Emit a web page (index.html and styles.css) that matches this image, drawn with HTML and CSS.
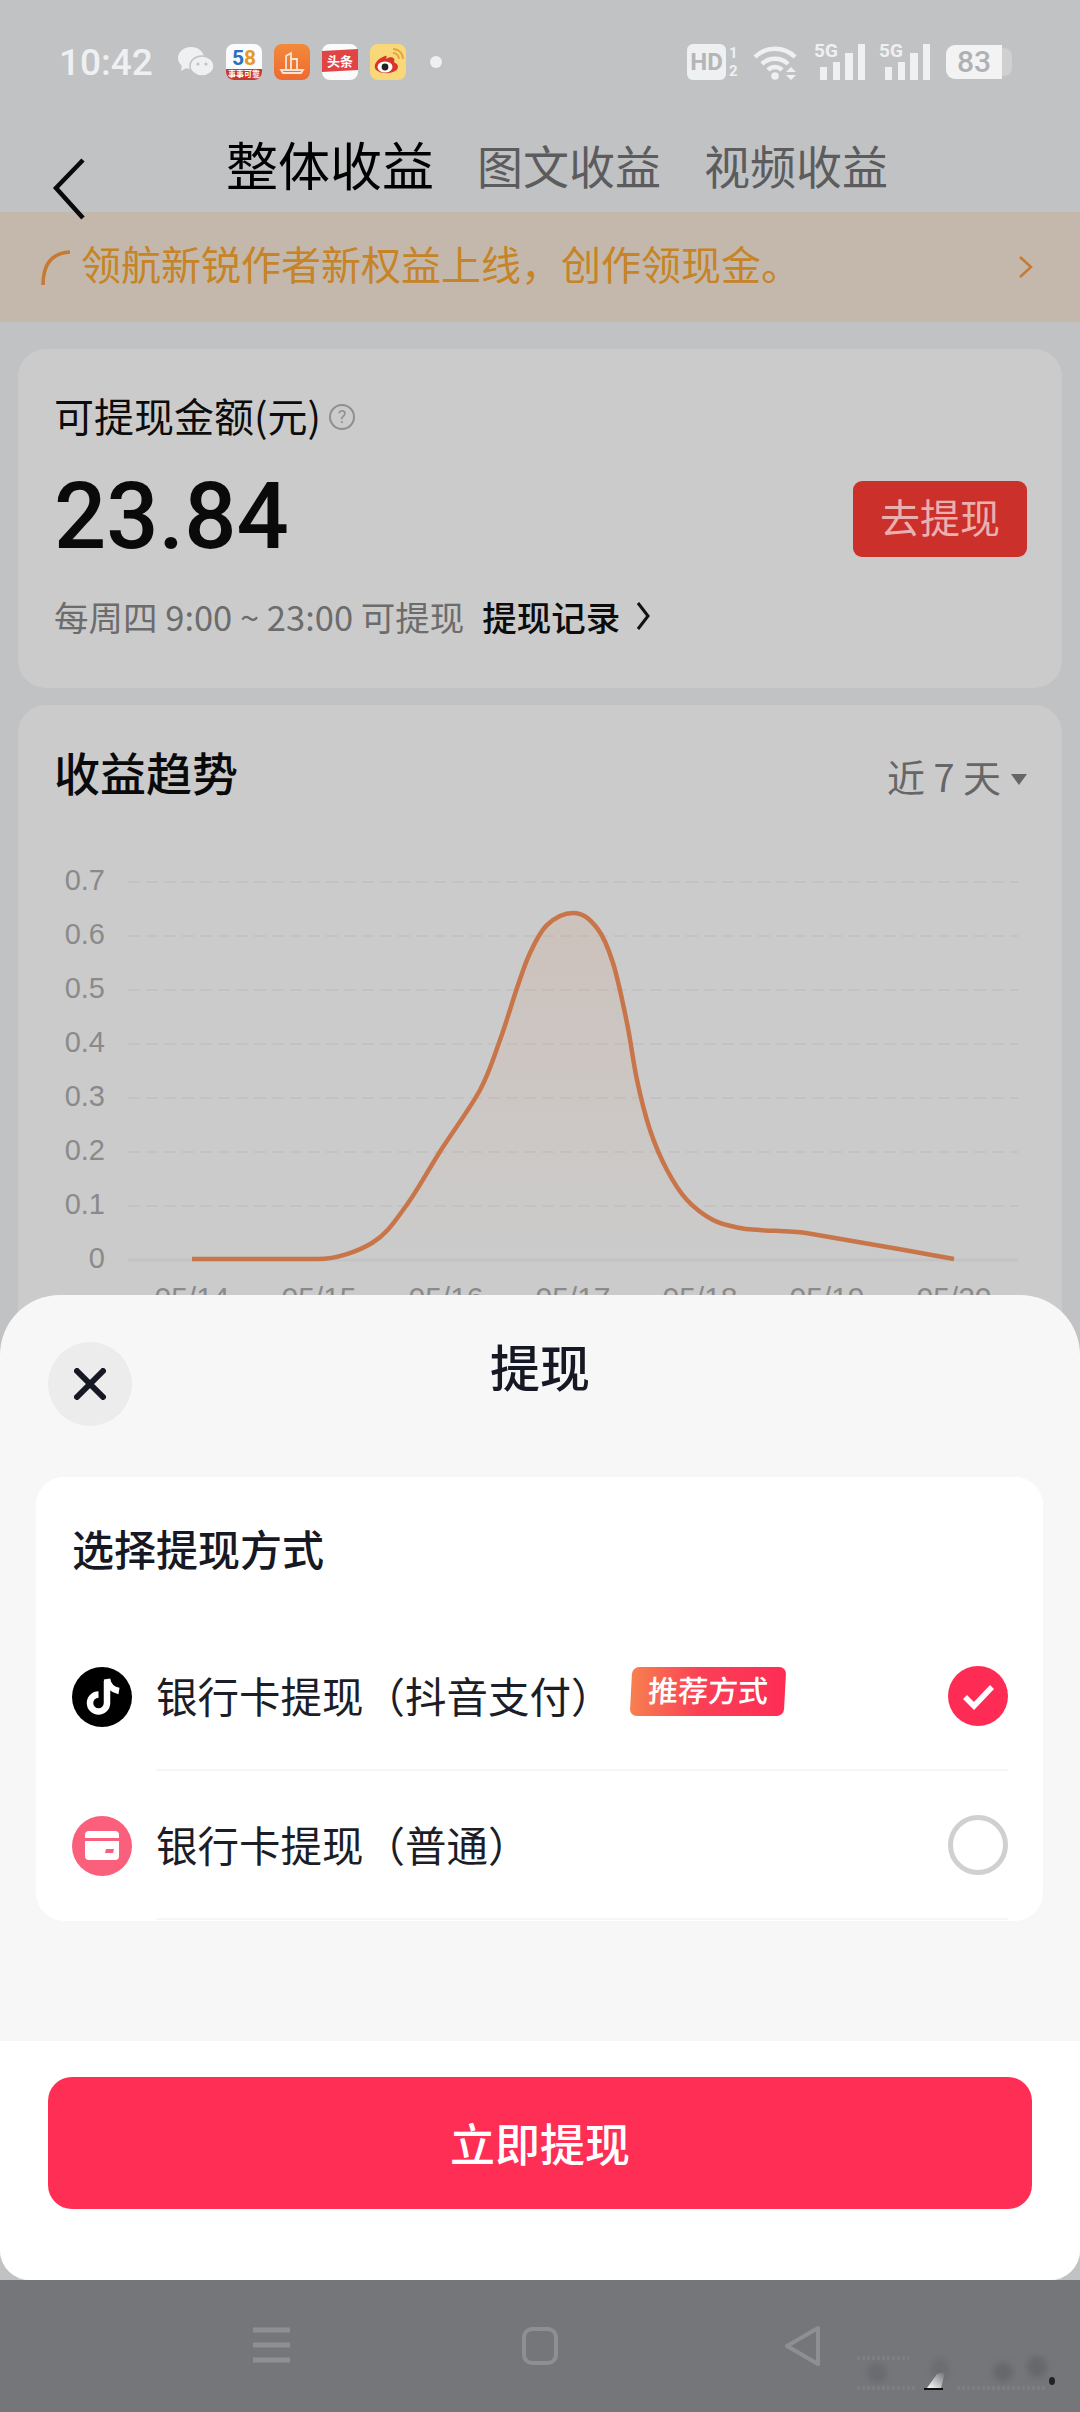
FILE: index.html
```html
<!DOCTYPE html>
<html lang="zh-CN">
<head>
    <meta charset="UTF-8">
    <meta name="viewport" content="width=device-width, initial-scale=1.0">
    <title>提现</title>
    <link rel="stylesheet" href="styles.css">
</head>
<body>
    <div class="phone">
        <div class="status-bar">
            <span class="time">10:42</span>
            <svg class="app-icon wechat" width="36" height="30" viewBox="0 0 36 30">
                <ellipse cx="13" cy="11" rx="13" ry="11" fill="#eff0f1"/>
                <path d="M4 17 L3 24 L10 20 Z" fill="#eff0f1"/>
                <ellipse cx="24" cy="19" rx="12" ry="10" fill="#eff0f1" stroke="#c1c2c4" stroke-width="1.5"/>
                <circle cx="20" cy="17" r="1.6" fill="#c1c2c4"/>
                <circle cx="28" cy="17" r="1.6" fill="#c1c2c4"/>
            </svg>
            <svg class="app-icon first" width="36" height="36" viewBox="0 0 36 36">
                <rect width="36" height="36" rx="8" fill="#fbfbfb"/>
                <text x="6" y="21" class="icon-58" fill="#2c6fc0">5</text>
                <text x="18" y="21" class="icon-58" fill="#e49a28">8</text>
                <path d="M0 25 H36 V28 A8 8 0 0 1 28 36 H8 A8 8 0 0 1 0 28 Z" fill="#c9382c"/>
                <text x="18" y="33" class="icon-tiny" fill="#fff">事事可靠</text>
            </svg>
            <svg class="app-icon" width="36" height="36" viewBox="0 0 36 36">
                <defs>
                    <linearGradient id="orange" x1="0" y1="0" x2="0" y2="1">
                        <stop offset="0" stop-color="#f28a3a"/>
                        <stop offset="1" stop-color="#ed6a30"/>
                    </linearGradient>
                </defs>
                <rect width="36" height="36" rx="8" fill="url(#orange)"/>
                <path d="M12 25 V12 L17 9 V25 M17 15 H23 V25 M7 26 H29 L27 29 H9 Z" fill="none" stroke="#fbe3d4" stroke-width="1.8"/>
            </svg>
            <svg class="app-icon" width="36" height="36" viewBox="0 0 36 36">
                <rect width="36" height="36" rx="8" fill="#fbfbfb"/>
                <path d="M0 7 L36 5 V26 L0 28 Z" fill="#e04444"/>
                <text x="18" y="22" class="icon-toutiao" fill="#fff">头条</text>
            </svg>
            <svg class="app-icon" width="36" height="36" viewBox="0 0 36 36">
                <rect width="36" height="36" rx="8" fill="#f8d878"/>
                <path d="M15 12 C7 15 4 20 5 24 C7 31 27 31 28 23 C28 20 25 19 24 18 C26 13 20 12 16 15 C17 12 17 11 15 12 Z" fill="#d8362c"/>
                <ellipse cx="15" cy="23" rx="7.5" ry="5.5" fill="#fff"/>
                <circle cx="15" cy="23" r="3.4" fill="#222"/>
                <path d="M23 9 A6 6 0 0 1 29 15 M23 5 A10 10 0 0 1 33 15" fill="none" stroke="#e8a33c" stroke-width="1.8"/>
            </svg>
            <span class="status-dot"></span>
            <div class="status-right">
                <span class="hd">HD</span>
                <span class="sim-num"><span>1</span><span>2</span></span>
                <svg class="wifi" width="48" height="36" viewBox="0 0 48 36">
                    <path d="M2 13 C13 2 31 2 42 13 M9 20 C16 13 28 13 35 20 M15 26 C19 22 25 22 29 26" fill="none" stroke="#eff0f1" stroke-width="4.5"/>
                    <circle cx="22" cy="32" r="3.8" fill="#eff0f1"/>
                    <path d="M33 28 L38 23 L43 28 Z M33 31 H43 L38 36 Z" fill="#eff0f1"/>
                </svg>
                <svg class="signal" width="52" height="42" viewBox="0 -6 52 42">
                    <text x="0" y="13" class="sig-text">5G</text>
                    <rect x="6" y="23" width="7" height="13" fill="#eff0f1"/>
                    <rect x="19" y="18" width="7" height="18" fill="#eff0f1"/>
                    <rect x="31" y="9" width="8" height="27" fill="#eff0f1"/>
                    <rect x="44" y="0" width="7" height="36" fill="#eff0f1"/>
                </svg>
                <svg class="signal" width="52" height="42" viewBox="0 -6 52 42">
                    <text x="0" y="13" class="sig-text">5G</text>
                    <rect x="6" y="23" width="7" height="13" fill="#eff0f1"/>
                    <rect x="19" y="18" width="7" height="18" fill="#eff0f1"/>
                    <rect x="31" y="9" width="8" height="27" fill="#eff0f1"/>
                    <rect x="44" y="0" width="7" height="36" fill="#eff0f1"/>
                </svg>
                <div class="battery"><span class="battery-num">83</span><span class="battery-nub"></span></div>
            </div>
        </div>

        <div class="header">
            <svg class="back" width="36" height="64" viewBox="0 0 36 64">
                <path d="M32 3 L5 31 L32 61" fill="none" stroke="#0a0a0a" stroke-width="4.5"/>
            </svg>
            <div class="tabs">
                <span class="tab active">整体收益</span>
                <span class="tab">图文收益</span>
                <span class="tab">视频收益</span>
            </div>
        </div>

        <div class="banner">
            <svg class="banner-icon" width="30" height="36" viewBox="0 0 30 36">
                <path d="M2 36 C2 16 10 4 29 3" fill="none" stroke="#c67a33" stroke-width="3.5"/>
            </svg>
            <span class="banner-text">领航新锐作者新权益上线，创作领现金。</span>
            <svg class="banner-arrow" width="16" height="24" viewBox="0 0 16 24">
                <path d="M2 2 L13 12 L2 22" fill="none" stroke="#c67a33" stroke-width="2.5"/>
            </svg>
        </div>

        <div class="content">
            <div class="card balance-card">
                <div class="balance-label">
                    <span>可提现金额(元)</span>
                    <span class="help">?</span>
                </div>
                <div class="balance-row">
                    <span class="amount">23.84</span>
                    <span class="withdraw-btn">去提现</span>
                </div>
                <div class="balance-note">
                    <span>每周四 9:00 ~ 23:00 可提现</span>
                    <span class="record">提现记录</span>
                    <svg width="16" height="30" viewBox="0 0 16 30">
                        <path d="M3 2 L13 15 L3 28" fill="none" stroke="#111" stroke-width="3"/>
                    </svg>
                </div>
            </div>

            <div class="card trend-card">
                <div class="trend-head">
                    <span class="trend-title">收益趋势</span>
                    <span class="trend-range">近 7 天<i class="caret"></i></span>
                </div>
                <svg class="chart" width="1044" height="450" viewBox="18 860 1044 450">
                    <defs>
                        <linearGradient id="area" x1="0" y1="0" x2="0" y2="1">
                            <stop offset="0" stop-color="#d88a5c" stop-opacity="0.14"/>
                            <stop offset="1" stop-color="#d88a5c" stop-opacity="0"/>
                        </linearGradient>
                    </defs>
                    <g class="grid">
                        <path d="M128 882 H1018"/>
                        <path d="M128 936 H1018"/>
                        <path d="M128 990 H1018"/>
                        <path d="M128 1044 H1018"/>
                        <path d="M128 1098 H1018"/>
                        <path d="M128 1152 H1018"/>
                        <path d="M128 1206 H1018"/>
                    </g>
                    <path class="axis" d="M128 1260 H1018"/>
                    <g class="y-labels">
                        <text x="105" y="890">0.7</text>
                        <text x="105" y="944">0.6</text>
                        <text x="105" y="998">0.5</text>
                        <text x="105" y="1052">0.4</text>
                        <text x="105" y="1106">0.3</text>
                        <text x="105" y="1160">0.2</text>
                        <text x="105" y="1214">0.1</text>
                        <text x="105" y="1268">0</text>
                    </g>
                    <path fill="url(#area)" d="M192 1259 H318 C336 1259 357 1252 372 1243 C387 1234 394.5 1221.5 406 1206 C417.5 1190.5 428.7 1169.3 441 1150 C453.3 1130.7 470.2 1108.3 480 1090 C489.8 1071.7 493.8 1057 500 1040 C506.2 1023 512 1002.5 517 988 C522 973.5 525 963.5 530 953 C535 942.5 539.8 931.7 547 925 C554.2 918.3 562 913 573 913 C584 913 590.3 919.7 597 928 C603.7 936.3 608 947.2 613 963 C618 978.8 623 1003.5 627 1023 C631 1042.5 633.2 1062.2 637 1080 C640.8 1097.8 645 1115 650 1130 C655 1145 660.8 1158.3 667 1170 C673.2 1181.7 679.3 1191.7 687 1200 C694.7 1208.3 704.2 1215.3 713 1220 C721.8 1224.7 732.2 1226.3 740 1228 C747.8 1229.7 749 1229.2 760 1230 C771 1231 790 1230.7 806 1233 C830 1237 905 1250 954 1259 V1260 H192 Z"/>
                    <path class="curve" d="M192 1259 H318 C336 1259 357 1252 372 1243 C387 1234 394.5 1221.5 406 1206 C417.5 1190.5 428.7 1169.3 441 1150 C453.3 1130.7 470.2 1108.3 480 1090 C489.8 1071.7 493.8 1057 500 1040 C506.2 1023 512 1002.5 517 988 C522 973.5 525 963.5 530 953 C535 942.5 539.8 931.7 547 925 C554.2 918.3 562 913 573 913 C584 913 590.3 919.7 597 928 C603.7 936.3 608 947.2 613 963 C618 978.8 623 1003.5 627 1023 C631 1042.5 633.2 1062.2 637 1080 C640.8 1097.8 645 1115 650 1130 C655 1145 660.8 1158.3 667 1170 C673.2 1181.7 679.3 1191.7 687 1200 C694.7 1208.3 704.2 1215.3 713 1220 C721.8 1224.7 732.2 1226.3 740 1228 C747.8 1229.7 749 1229.2 760 1230 C771 1231 790 1230.7 806 1233 C830 1237 905 1250 954 1259"/>
                    <g class="x-labels">
                        <text x="192" y="1308">05/14</text>
                        <text x="319" y="1308">05/15</text>
                        <text x="446" y="1308">05/16</text>
                        <text x="573" y="1308">05/17</text>
                        <text x="700" y="1308">05/18</text>
                        <text x="827" y="1308">05/19</text>
                        <text x="954" y="1308">05/20</text>
                    </g>
                </svg>
            </div>
        </div>

        <!-- bottom sheet and nav lie over the page -->
        <div class="overlay">
            <div class="sheet">
                <div class="sheet-head">
                    <span class="close">
                        <svg width="32" height="32" viewBox="0 0 32 32">
                            <path d="M3 3 L29 29 M29 3 L3 29" fill="none" stroke="#161823" stroke-width="6" stroke-linecap="round"/>
                        </svg>
                    </span>
                    <span class="sheet-title">提现</span>
                </div>
                <div class="method-card">
                    <div class="method-title">选择提现方式</div>
                    <div class="method-row">
                        <svg class="method-icon" width="60" height="60" viewBox="0 0 60 60">
                            <circle cx="30" cy="30" r="30" fill="#000"/>
                            <path d="M35 14 V36 A8.5 8.5 0 1 1 26.5 27.5" fill="none" stroke="#fff" stroke-width="6.5"/>
                            <path d="M35 12 C36 19 41 23 47 24" fill="none" stroke="#fff" stroke-width="6.5"/>
                        </svg>
                        <div class="method-body">
                            <span class="method-name">银行卡提现（抖音支付）</span>
                            <span class="tag">推荐方式</span>
                            <svg class="radio" width="60" height="60" viewBox="0 0 60 60">
                                <circle cx="30" cy="30" r="30" fill="#fe2c55"/>
                                <path d="M17 31 L26 40 L44 21" fill="none" stroke="#fff" stroke-width="5.5"/>
                            </svg>
                        </div>
                    </div>
                    <div class="method-row">
                        <svg class="method-icon" width="60" height="60" viewBox="0 0 60 60">
                            <circle cx="30" cy="30" r="30" fill="#fa5f7c"/>
                            <rect x="13" y="15" width="34" height="29" rx="4" fill="#fff"/>
                            <rect x="13" y="22" width="34" height="3" fill="#fa5f7c"/>
                            <path d="M34 33 H42 L41 37 H33 Z" fill="#fa5f7c"/>
                        </svg>
                        <div class="method-body">
                            <span class="method-name">银行卡提现（普通）</span>
                            <span class="radio radio-off"></span>
                        </div>
                    </div>
                </div>
                <div class="sheet-foot">
                    <div class="submit">立即提现</div>
                </div>
            </div>
            <div class="nav-bar">
                <svg class="nav-menu" width="37" height="36" viewBox="0 0 37 36">
                    <path d="M0 3 H37 M0 18 H37 M0 33 H37" stroke="#8e8f93" stroke-width="5"/>
                </svg>
                <svg class="nav-home" width="36" height="38" viewBox="0 0 36 38">
                    <rect x="2" y="2" width="32" height="34" rx="8" fill="none" stroke="#8e8f93" stroke-width="4"/>
                </svg>
                <svg class="nav-back" width="38" height="42" viewBox="0 0 38 42">
                    <path d="M34 3 V39 L3 21 Z" fill="none" stroke="#8e8f93" stroke-width="4" stroke-linejoin="round"/>
                </svg>
                <svg class="watermark" width="200" height="44" viewBox="0 0 200 44">
                    <defs>
                        <filter id="soft" x="-50%" y="-50%" width="200%" height="200%"><feGaussianBlur stdDeviation="3"/></filter>
                        <linearGradient id="gleam" x1="0" y1="1" x2="1" y2="0">
                            <stop offset="0" stop-color="#fff"/>
                            <stop offset="1" stop-color="#fff" stop-opacity="0"/>
                        </linearGradient>
                    </defs>
                    <g filter="url(#soft)">
                        <ellipse cx="20" cy="19" rx="10" ry="10" fill="#6a6b6f"/>
                        <ellipse cx="83" cy="16" rx="9" ry="12" fill="#6c6d71"/>
                        <ellipse cx="146" cy="18" rx="10" ry="10" fill="#66676b"/>
                        <ellipse cx="180" cy="13" rx="10" ry="11" fill="#66676b"/>
                    </g>
                    <path d="M0 4 H52 M0 34 H60 M100 34 H190" stroke="#7d7e82" stroke-width="4" stroke-dasharray="3 2"/>
                    <path d="M70 34 L80 20 L88 18 L84 34 Z" fill="url(#gleam)"/>
                    <path d="M67 35 H86" stroke="#111" stroke-width="2"/>
                    <ellipse cx="195" cy="27" rx="3" ry="4" fill="#222"/>
                </svg>
            </div>
        </div>
    </div>
</body>
</html>
```

FILE: styles.css
```css
* {
    margin: 0;
    padding: 0;
    box-sizing: border-box;
}

body {
    font-family: "Noto Sans CJK SC", "Noto Sans", sans-serif;
    background: #c1c2c4;
}

.phone {
    position: relative;
    width: 1080px;
    height: 2412px;
    overflow: hidden;
    background: #c1c2c4;
}

/* status bar */
.status-bar {
    display: flex;
    align-items: center;
    height: 124px;
    padding: 0 68px 0 59px;
    color: #eff0f1;
}

.time {
    font-family: Roboto, sans-serif;
    font-size: 37px;
    font-weight: 500;
    width: 119px;
}

.app-icon {
    display: block;
    margin-right: 12px;
}

.icon-58 {
    font-family: Roboto, sans-serif;
    font-size: 21px;
    font-weight: 700;
}

.icon-tiny {
    font-size: 8px;
    font-weight: 700;
    text-anchor: middle;
}

.icon-toutiao {
    font-size: 13px;
    font-weight: 700;
    text-anchor: middle;
}

.status-dot {
    width: 12px;
    height: 12px;
    margin-left: 12px;
    border-radius: 50%;
    background: #eff0f1;
}

.status-right {
    display: flex;
    align-items: center;
    margin-left: auto;
}

.hd {
    width: 39px;
    height: 36px;
    border-radius: 6px;
    background: #eff0f1;
    color: #b4b5b7;
    font-family: Roboto, sans-serif;
    font-size: 24px;
    font-weight: 700;
    line-height: 36px;
    text-align: center;
}

.sim-num {
    display: flex;
    flex-direction: column;
    width: 10px;
    margin-left: 3px;
    font-family: Roboto, sans-serif;
    font-size: 15px;
    font-weight: 700;
    line-height: 18px;
}

.wifi {
    margin-left: 14px;
}

.signal {
    margin: 0 0 6px 13px;
}

.sig-text {
    font-family: Roboto, sans-serif;
    font-size: 19px;
    font-weight: 700;
    fill: #eff0f1;
}

.battery {
    display: flex;
    align-items: center;
    margin-left: 15px;
}

.battery-num {
    width: 56px;
    height: 34px;
    border-radius: 9px 0 0 9px;
    background: #f3f3f4;
    color: #b0b1b3;
    font-family: Roboto, sans-serif;
    font-size: 30px;
    font-weight: 500;
    line-height: 34px;
    text-align: center;
}

.battery-nub {
    width: 10px;
    height: 28px;
    border-radius: 0 8px 8px 0;
    background: #cfd0d1;
}

/* header */
.header {
    position: relative;
    height: 88px;
}

.back {
    position: absolute;
    left: 51px;
    top: 33px;
    z-index: 2;
}

.tabs {
    display: flex;
    align-items: center;
    gap: 43px;
    height: 80px;
    padding-left: 226px;
}

.tab {
    font-size: 46px;
    line-height: 60px;
    color: #5c5c5e;
}

.tab.active {
    font-size: 52px;
    color: #000;
}

.banner {
    display: flex;
    align-items: center;
    height: 110px;
    padding: 0 46px 0 41px;
    background: #c4b8ac;
}

.banner-icon {
    margin-right: 10px;
}

.banner-text {
    margin-bottom: 8px;
    font-size: 40px;
    line-height: 56px;
    color: #c68427;
}

.banner-arrow {
    margin-left: auto;
}

/* cards */
.content {
    padding: 27px 18px 0;
}

.card {
    background: #cbcbcb;
    border-radius: 28px;
}

.balance-card {
    height: 339px;
    padding: 39px 35px 0 36px;
}

.balance-label {
    display: flex;
    align-items: center;
    gap: 8px;
    font-size: 40px;
    line-height: 54px;
    color: #0c0c0c;
}

.help {
    width: 26px;
    height: 26px;
    margin-top: 4px;
    border: 2px solid #8f8f8f;
    border-radius: 50%;
    color: #8f8f8f;
    font-family: Roboto, sans-serif;
    font-size: 18px;
    line-height: 22px;
    text-align: center;
}

.balance-row {
    display: flex;
    align-items: center;
    justify-content: space-between;
    height: 76px;
    margin-top: 39px;
}

.amount {
    margin-bottom: 5px;
    font-family: Roboto, sans-serif;
    font-size: 92px;
    font-weight: 500;
    line-height: 76px;
    color: #0a0a0a;
}

.withdraw-btn {
    width: 174px;
    height: 76px;
    border-radius: 9px;
    background: #cc302b;
    color: #e9b0ae;
    font-size: 40px;
    line-height: 70px;
    text-align: center;
}

.balance-note {
    display: flex;
    align-items: center;
    height: 50px;
    margin-top: 34px;
    font-size: 34.5px;
    color: #6c6c6c;
}

.record {
    margin: 0 15px 0 18px;
    font-weight: 500;
    color: #0c0c0c;
}

.trend-card {
    height: 1600px;
    margin-top: 17px;
    padding-top: 36px;
}

.trend-head {
    display: flex;
    justify-content: space-between;
    align-items: flex-end;
    height: 60px;
    padding: 0 35px 0 36px;
}

.trend-title {
    font-size: 46px;
    font-weight: 500;
    line-height: 60px;
    color: #0a0a0a;
}

.trend-range {
    display: flex;
    align-items: center;
    font-size: 38px;
    line-height: 50px;
    color: #666;
}

.caret {
    width: 0;
    height: 0;
    margin: 6px 0 0 10px;
    border-left: 8px solid transparent;
    border-right: 8px solid transparent;
    border-top: 11px solid #666;
}

.chart {
    display: block;
    margin-top: 59px;
}

.grid path {
    stroke: #c3c3c4;
    stroke-width: 2;
    stroke-dasharray: 12 6;
}

.axis {
    stroke: #c3c3c4;
    stroke-width: 3;
}

.curve {
    fill: none;
    stroke: #c8754a;
    stroke-width: 4.5;
}

.y-labels text {
    font-family: "Liberation Sans", sans-serif;
    font-size: 29px;
    fill: #8a8a8a;
    text-anchor: end;
}

.x-labels text {
    font-family: "Liberation Sans", sans-serif;
    font-size: 30px;
    fill: #8a8a8a;
    text-anchor: middle;
}

/* bottom sheet */
.overlay {
    position: absolute;
    left: 0;
    right: 0;
    bottom: 0;
}

.sheet {
    overflow: hidden;
    background: #f7f7f8;
    border-radius: 60px 60px 30px 30px;
}

.sheet-head {
    display: grid;
    grid-template-columns: 180px 1fr 180px;
    height: 182px;
}

.close {
    display: flex;
    align-items: center;
    justify-content: center;
    width: 84px;
    height: 84px;
    margin: 47px 0 0 48px;
    border-radius: 50%;
    background: #ececec;
}

.sheet-title {
    margin-top: 40px;
    font-size: 50px;
    font-weight: 500;
    line-height: 60px;
    text-align: center;
    color: #161823;
}

.method-card {
    height: 444px;
    margin: 0 37px 0 36px;
    padding: 41px 35px 0 36px;
    background: #fff;
    border-radius: 28px;
}

.method-title {
    height: 104px;
    font-size: 42px;
    font-weight: 500;
    line-height: 60px;
    color: #161823;
}

.method-row {
    display: flex;
    align-items: center;
}

.method-icon {
    flex: none;
    margin-right: 24px;
}

.method-body {
    display: flex;
    flex: 1;
    align-items: center;
    height: 149px;
    border-bottom: 2px solid #f6f6f6;
}

.method-name {
    margin-bottom: 2px;
    font-size: 41.5px;
    line-height: 60px;
    color: #1c1d26;
}

.tag {
    width: 154px;
    height: 49px;
    margin: -8px 0 0 18px;
    border-radius: 7px;
    background: linear-gradient(90deg, #f7804f 0%, #fb3f55 45%, #fe2c55 100%);
    color: #fff;
    font-size: 30px;
    font-weight: 500;
    line-height: 44px;
    text-align: center;
    transform: skewX(-3deg);
}

.radio {
    flex: none;
    width: 60px;
    height: 60px;
    margin-left: auto;
}

.radio-off {
    border: 5px solid #d0d0d0;
    border-radius: 50%;
}

.sheet-foot {
    height: 239px;
    margin-top: 120px;
    padding: 36px 48px 0;
    background: #fff;
}

.submit {
    height: 132px;
    border-radius: 24px;
    background: #ff2e55;
    color: #fff;
    font-size: 45px;
    font-weight: 500;
    line-height: 132px;
    text-align: center;
}

/* system nav */
.nav-bar {
    position: relative;
    display: flex;
    align-items: flex-start;
    height: 132px;
    padding: 47px 0 0 253px;
    background: #75767a;
}

.nav-home {
    margin-left: 232px;
}

.nav-back {
    margin: -2px 0 0 226px;
}

.watermark {
    position: absolute;
    left: 857px;
    top: 74px;
}
```
